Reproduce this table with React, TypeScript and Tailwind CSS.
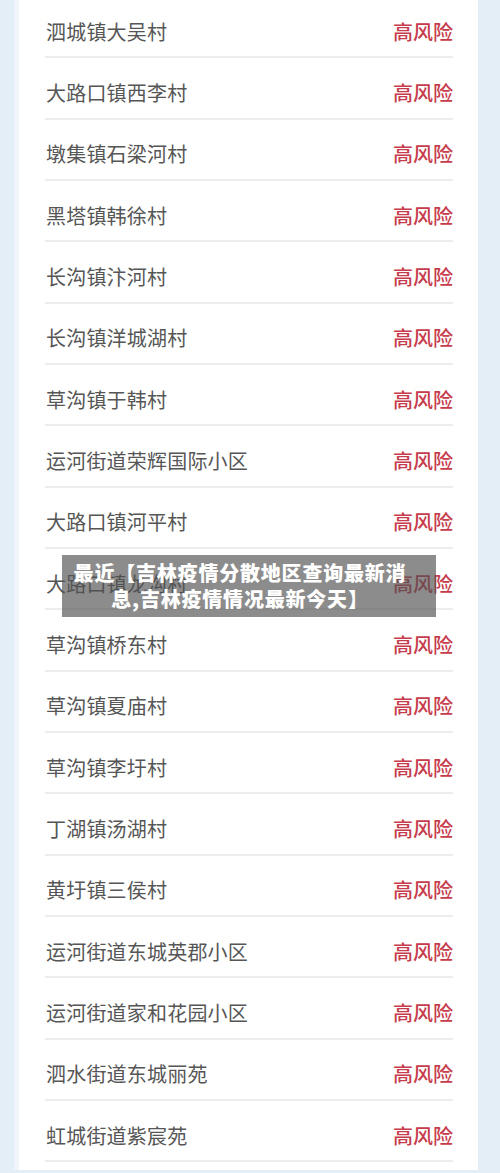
import React from "react";

const rows = [
  "泗城镇大吴村",
  "大路口镇西李村",
  "墩集镇石梁河村",
  "黑塔镇韩徐村",
  "长沟镇汴河村",
  "长沟镇洋城湖村",
  "草沟镇于韩村",
  "运河街道荣辉国际小区",
  "大路口镇河平村",
  "大路口镇龙沟村",
  "草沟镇桥东村",
  "草沟镇夏庙村",
  "草沟镇李圩村",
  "丁湖镇汤湖村",
  "黄圩镇三侯村",
  "运河街道东城英郡小区",
  "运河街道家和花园小区",
  "泗水街道东城丽苑",
  "虹城街道紫宸苑",
];

export default function App() {
  return (
    <div
      className="relative h-[1173px] w-[500px] overflow-hidden bg-[#e4eef7]"
      style={{ fontFamily: '"Noto Sans CJK SC", "Noto Sans", sans-serif' }}
    >
      <div className="ml-[14px] h-full w-[464px] border-l-[5px] border-[#eff5fb] bg-white">
        <div className="-mt-[3px] ml-[26px] w-[408px]">
          {rows.map((name) => (
            <div
              key={name}
              className="flex h-[61.33px] items-center justify-between border-b-2 border-[#ededed] pt-[10px] pl-px"
            >
              <span className="text-[20px] leading-none tracking-[0.2px] text-[#565656]">
                {name}
              </span>
              <span className="text-[20px] font-medium leading-none text-[#c63c4c]">
                高风险
              </span>
            </div>
          ))}
        </div>
      </div>
      <div className="absolute left-[62px] top-[555px] flex h-[62px] w-[374px] flex-col items-center justify-center bg-[rgba(80,80,80,0.66)] pr-[18px]">
        <div className="text-center text-[20px] font-black leading-[26px] tracking-[0.8px] text-white">
          最近【吉林疫情分散地区查询最新消
          <br />
          息,吉林疫情情况最新今天】
        </div>
      </div>
    </div>
  );
}
